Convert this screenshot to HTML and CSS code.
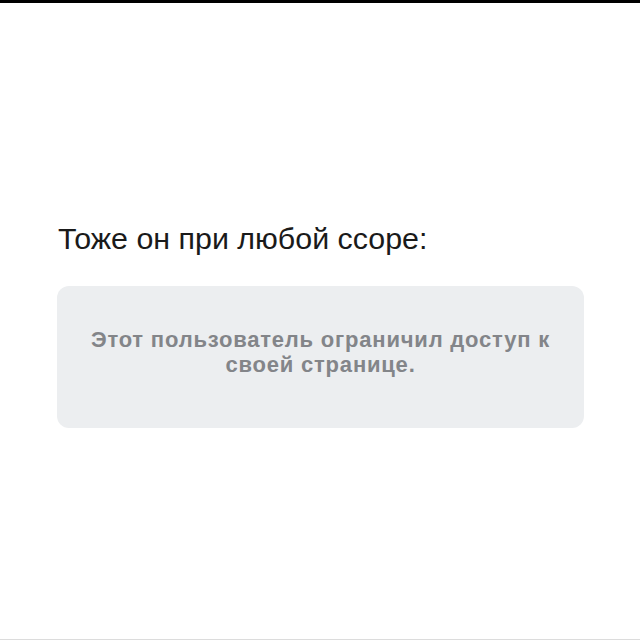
FILE: index.html
```html
<!DOCTYPE html>
<html lang="ru">
<head>
    <meta charset="UTF-8">
    <meta name="viewport" content="width=device-width, initial-scale=1.0">
    <title>Тоже он при любой ссоре</title>
    <link rel="stylesheet" href="styles.css">
</head>
<body>
    <div class="top-bar"></div>
    <main class="post">
        <h1 class="caption">Тоже он при любой ссоре:</h1>
        <div class="locked">
            <p>Этот пользователь ограничил доступ к своей странице.</p>
        </div>
    </main>
</body>
</html>
```

FILE: styles.css
```css
html, body {
    margin: 0;
    height: 100%;
}

body {
    background: #fff;
    font-family: "Liberation Sans", Arial, sans-serif;
    display: flex;
    flex-direction: column;
    border-bottom: 1px solid #dcdcdc;
    box-sizing: border-box;
}

.top-bar {
    height: 3px;
    background: #000;
}

.post {
    padding: 217px 56px 0 57px;
}

.caption {
    margin: 0 0 30px 1px;
    font-size: 30.4px;
    font-weight: normal;
    color: #1a1a1a;
    line-height: 36px;
}

/* grey plate for a closed profile */
.locked {
    background: #eceef0;
    border-radius: 12px;
    height: 142px;
    box-sizing: border-box;
    display: flex;
    align-items: center;
    justify-content: center;
    padding: 0 10px 10px;
}

.locked p {
    margin: 0;
    max-width: 490px;
    text-align: center;
    color: #838589;
    font-size: 22px;
    font-weight: bold;
    letter-spacing: 0.8px;
    line-height: 25px;
}
```
